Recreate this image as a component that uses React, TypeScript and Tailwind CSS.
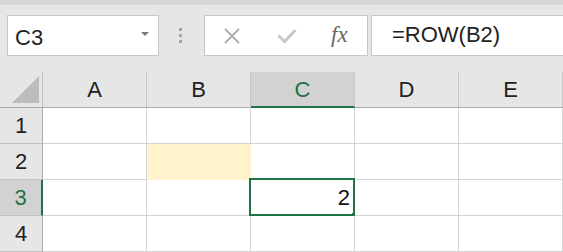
import React from "react";

const cols = ["A", "B", "C", "D", "E"];
const rows = [1, 2, 3, 4];

export default function App() {
  return (
    <div
      className="w-[563px] h-[252px] overflow-hidden bg-[#e6e6e6] flex flex-col"
      style={{ fontFamily: '"Liberation Sans", Arial, sans-serif' }}
    >
      <div className="h-[5px] bg-[#d5d5d5] shrink-0" />
      {/* toolbar */}
      <div className="h-[67px] shrink-0 flex items-start pt-[10px]">
        <div className="ml-[7px] w-[152px] h-[41px] bg-white border border-[#c6c6c6] flex items-center shrink-0">
          <span className="ml-[7px] mt-[4px] text-[22px] leading-none text-[#222]">C3</span>
          <svg className="ml-auto mr-[9px] mt-[-3px]" width="8" height="4" viewBox="0 0 8 4">
            <polygon points="0,0 8,0 4,4" fill="#7a7a7a" />
          </svg>
        </div>
        <div className="ml-[20px] mt-[13px] flex flex-col gap-[3px] shrink-0">
          <div className="w-[3px] h-[3px] bg-[#a6a6a6]" />
          <div className="w-[3px] h-[3px] bg-[#a6a6a6]" />
          <div className="w-[3px] h-[3px] bg-[#a6a6a6]" />
        </div>
        <div className="ml-[22px] w-[164px] h-[41px] bg-white border border-[#c6c6c6] flex items-center shrink-0">
          <svg className="ml-[18px]" width="18" height="16" viewBox="0 0 18 16">
            <path d="M2 1 L16 15 M16 1 L2 15" stroke="#ababab" strokeWidth="1.8" fill="none" />
          </svg>
          <svg className="ml-[36px]" width="20" height="16" viewBox="0 0 20 16">
            <path d="M1.5 7.5 L7.5 13.5 L18.5 2" stroke="#c8c8c8" strokeWidth="3" fill="none" />
          </svg>
          <span
            className="ml-[34px] text-[23px] leading-none italic text-[#666] mt-[-2px]"
            style={{ fontFamily: '"Liberation Serif", "Times New Roman", serif' }}
          >
            fx
          </span>
        </div>
        <div className="ml-[3px] w-[220px] h-[41px] bg-white border border-[#c6c6c6] flex items-center shrink-0">
          <span className="ml-[20px] mt-[-1px] text-[22px] leading-none text-[#222]">=ROW(B2)</span>
        </div>
      </div>
      {/* grid */}
      <div className="flex flex-col shrink-0">
        <div className="flex h-[36px]">
          <div className="w-[43px] h-[36px] shrink-0 border-r border-b border-r-[#c0c0c0] border-b-[#ababab] flex items-end justify-end">
            <svg className="mb-[3px] mr-[2px]" width="28" height="28" viewBox="0 0 28 28">
              <polygon points="0,27 27,27 27,0" fill="#bdbdbd" />
            </svg>
          </div>
          {cols.map((c) => {
            const sel = c === "C";
            return (
              <div
                key={c}
                className={
                  sel
                    ? "w-[104px] h-[36px] shrink-0 bg-[#d2d2d2] border-r border-r-[#c6c6c6] border-b-2 border-b-[#217346] flex items-center justify-center text-[22px] text-[#217346] pt-[1px]"
                    : "w-[104px] h-[36px] shrink-0 border-r border-r-[#c6c6c6] border-b border-b-[#ababab] flex items-center justify-center text-[22px] text-[#222]"
                }
              >
                {c}
              </div>
            );
          })}
        </div>
        {rows.map((r) => {
          const selRow = r === 3;
          return (
            <div key={r} className="flex h-[36px]">
              <div
                className={
                  selRow
                    ? "w-[43px] h-[36px] shrink-0 bg-[#d2d2d2] border-r-2 border-r-[#217346] border-b border-b-[#c0c0c0] flex items-center justify-center text-[22px] text-[#217346]"
                    : "w-[43px] h-[36px] shrink-0 border-r border-r-[#ababab] border-b border-b-[#c0c0c0] flex items-center justify-center text-[22px] text-[#222]"
                }
              >
                {r}
              </div>
              {cols.map((c) => {
                const isB2 = c === "B" && r === 2;
                const isC3 = c === "C" && r === 3;
                return (
                  <div
                    key={c}
                    className={
                      isB2
                        ? "w-[104px] h-[36px] shrink-0 bg-[#fff2cc] border-r border-b border-[#fff2cc]"
                        : "relative w-[104px] h-[36px] shrink-0 bg-white border-r border-b border-[#d4d4d4] flex items-center justify-end"
                    }
                  >
                    {isC3 && (
                      <>
                        <span className="mr-[4px] text-[22px] leading-none text-[#111]">2</span>
                        <div className="absolute left-[-2px] top-[-2px] w-[106px] h-[38px] border-2 border-[#217346]" />
                        <div className="absolute right-[-4px] bottom-[-4px] w-[6px] h-[6px] bg-[#217346]" />
                      </>
                    )}
                  </div>
                );
              })}
            </div>
          );
        })}
      </div>
    </div>
  );
}
